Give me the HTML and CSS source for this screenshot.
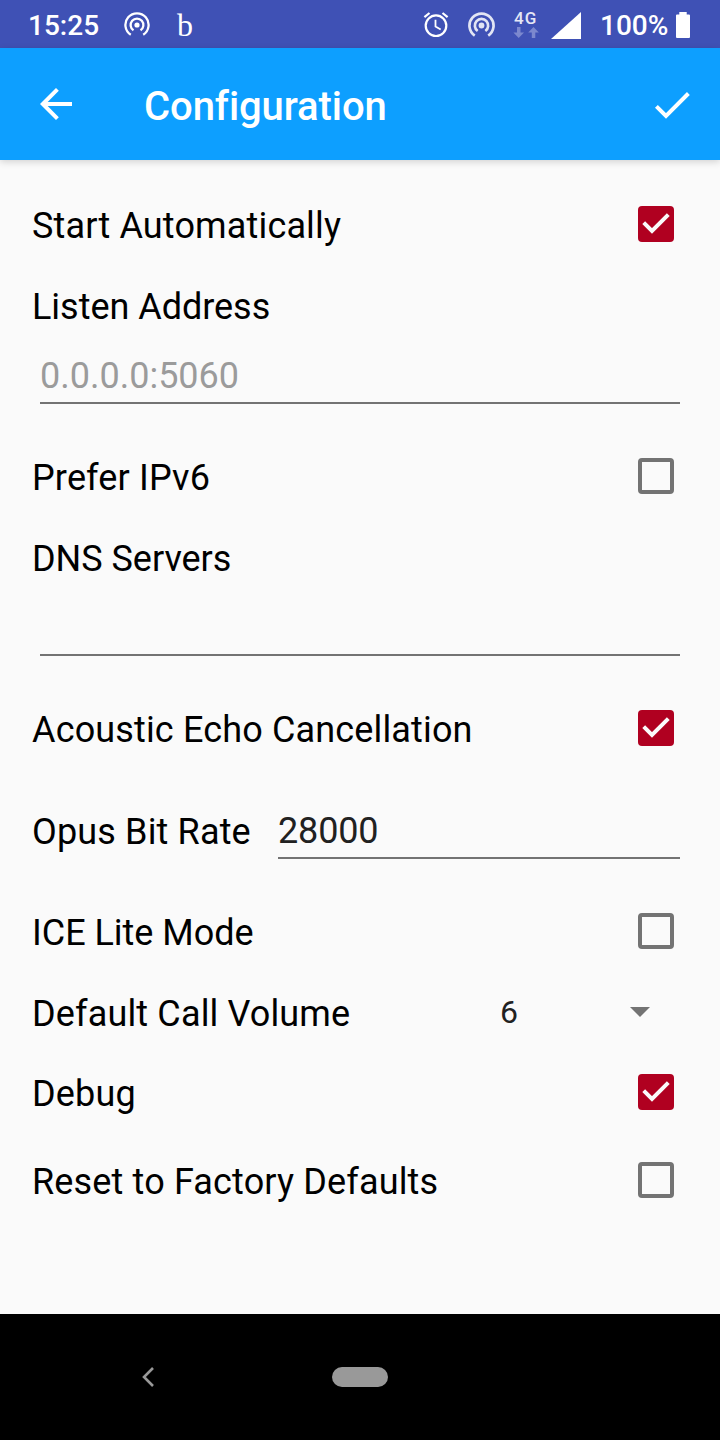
FILE: index.html
```html
<!DOCTYPE html>
<html lang="en">
<head>
<meta charset="utf-8">
<title>Configuration</title>
<link rel="stylesheet" href="styles.css">
</head>
<body>
<div class="screen">
  <div class="status">
    <span class="clock">15:25</span>
    <svg class="hotspot" viewBox="0 0 26 26"><g fill="none" stroke="#fff" stroke-width="2.3"><path d="M6.8 22.7A11.6 11.6 0 1 1 19.2 22.7"/><path d="M9.5 18.3A6.4 6.4 0 1 1 16.5 18.3"/></g><circle cx="13" cy="13" r="2.6" fill="#fff"/></svg>
    <span class="app-letter">b</span>
    <span class="spacer"></span>
    <svg class="alarm" viewBox="0 0 26 26"><g fill="none" stroke="#fff" stroke-width="2.2"><circle cx="13" cy="13.700" r="10.3"/><path d="M1.4 5.2 6.5 1M24.6 5.2 19.5 1"/><path stroke-width="1.8" d="M12.5 7.8V14.500l5.2 3"/></g></svg>
    <svg class="hotspot dim" viewBox="0 0 26 26"><g fill="none" stroke="#fff" stroke-width="2.6"><path d="M6.5 22.7A11.6 11.6 0 1 1 19.5 22.7"/><path d="M9.3 18.3A6.4 6.4 0 1 1 16.7 18.3"/></g><circle cx="13" cy="13" r="2.8" fill="#fff"/></svg>
    <div class="network">
      <span class="network-type">4G</span>
      <svg class="traffic" viewBox="0 0 26 12"><path fill="#7c88ce" d="M4 0h3.500v5.500H11L5.700 11 .4 5.500H4zM18.800 11h3.500V5.500h3.500L20.500 0l-5.300 5.500h3.600z"/></svg>
    </div>
    <svg class="signal" viewBox="0 0 30 27"><path fill="#fff" d="M0 27 30 0V27z"/></svg>
    <span class="percent">100%</span>
    <svg class="battery" viewBox="0 0 14 26"><path fill="#fff" d="M3.3 0h7.4v2.5H13a1 1 0 0 1 1 1V25a1 1 0 0 1-1 1H1a1 1 0 0 1-1-1V3.500a1 1 0 0 1 1-1H3.300z"/></svg>
  </div>
  <header class="appbar">
    <svg class="back" viewBox="0 0 32 32"><path fill="none" stroke="#fff" stroke-width="4" d="M32 16H3M17.400 1.400 2.800 16l14.600 14.600"/></svg>
    <h1 class="title">Configuration</h1>
    <svg class="done" viewBox="0 0 36 28"><path fill="none" stroke="#fff" stroke-width="4" d="M2.400 15.300 12 24.900 34.400 2.500"/></svg>
  </header>
  <main class="settings">
    <div class="row"><span class="label">Start Automatically</span><span class="box checked"><svg class="tick" viewBox="0 0 36 36"><path d="M5.700 16.600 14 24.900 30.300 8.600"/></svg></span></div>
    <div class="row caption"><span class="label tight">Listen Address</span></div>
    <div class="field hint">0.0.0.0:5060</div>
    <div class="row"><span class="label">Prefer IPv6</span><span class="box"></span></div>
    <div class="row caption"><span class="label tight">DNS Servers</span></div>
    <div class="field"></div>
    <div class="row"><span class="label">Acoustic Echo Cancellation</span><span class="box checked"><svg class="tick" viewBox="0 0 36 36"><path d="M5.700 16.600 14 24.900 30.300 8.600"/></svg></span></div>
    <div class="row bitrate"><span class="label">Opus Bit Rate</span><div class="field inline">28000</div></div>
    <div class="row ice"><span class="label tight">ICE Lite Mode</span><span class="box"></span></div>
    <div class="row volume"><span class="label">Default Call Volume</span><div class="select"><span>6</span><svg class="caret" viewBox="0 0 20 10"><path fill="#737373" d="M0 0h20L10 10z"/></svg></div></div>
    <div class="row debug"><span class="label">Debug</span><span class="box checked"><svg class="tick" viewBox="0 0 36 36"><path d="M5.700 16.600 14 24.900 30.300 8.600"/></svg></span></div>
    <div class="row reset"><span class="label">Reset to Factory Defaults</span><span class="box"></span></div>
  </main>
  <nav class="navbar">
    <svg class="nav-back" viewBox="0 0 12 20"><path fill="none" stroke="#999" stroke-width="2.600" d="M11 1 2 10l9 9"/></svg>
    <span class="home"></span>
  </nav>
</div>
</body>
</html>
```
FILE: styles.css
```css
* { box-sizing: border-box; }
body { margin: 0; font-family: Roboto, sans-serif; }
svg { display: block; flex: none; }
.screen { width: 720px; height: 1440px; display: flex; flex-direction: column; background: #fafafa; overflow: hidden; }

.status { height: 48px; flex: none; display: flex; align-items: center; padding: 2px 30px 0 28px; background: #3f51b5; color: #fff; }
.clock, .percent { font-size: 28px; font-weight: 500; line-height: 44px; padding-top: 2px; white-space: nowrap; }
.clock { width: 96px; }
.hotspot { width: 26px; height: 26px; }
.app-letter { font: 32px/46px "Liberation Serif", serif; margin-left: 27px; }
.spacer { flex: 1; }
.alarm { width: 26px; height: 26px; margin-right: 19px; }
.dim { width: 27px; height: 27px; opacity: .85; margin-right: 18px; }
.network { width: 26px; height: 28px; margin-right: 12px; color: #e5e7f5; }
.network-type { display: block; height: 16px; padding-left: 1px; font-size: 17px; font-weight: 500; line-height: 14px; letter-spacing: 1px; }
.traffic { width: 26px; height: 12px; }
.signal { width: 30px; height: 27px; margin-right: 19px; }
.percent { width: 76px; }
.battery { width: 14px; height: 26px; }

.appbar { height: 112px; flex: none; display: flex; align-items: center; padding: 0 30px 0 40px; background: #0d9fff; box-shadow: 0 2px 7px rgba(0, 0, 0, .16); z-index: 1; }
.back { width: 32px; height: 32px; }
.title { margin: 6px 0 0 72px; flex: 1; font-size: 40px; font-weight: 500; line-height: 48px; letter-spacing: -.08px; color: #fff; font-variant-ligatures: common-ligatures; }
.done { width: 36px; height: 28px; margin-top: 1px; }

.settings { flex: 1; padding: 26px 40px 0 32px; color: #000; font-size: 36px; line-height: 42px; }
.row { height: 80px; display: flex; align-items: center; justify-content: space-between; }
.label { white-space: nowrap; letter-spacing: .15px; }
.tight { letter-spacing: -.03px; }
.caption { height: 82px; }
.box { width: 36px; height: 36px; margin: 0 6px 4px 0; border: 4px solid #737373; border-radius: 4px; }
.checked { border: 0; background: #b00020; }
.tick { width: 36px; height: 36px; fill: none; stroke: #fafafa; stroke-width: 4; }
.field { height: 56px; margin: 0 0 34px 8px; padding-top: 7px; border-bottom: 2px solid #737373; color: #212121; }
.hint { color: #9b9b9b; }
.bitrate { height: 124px; }
.inline { width: 402px; margin: 0 0 2px; letter-spacing: -.15px; }
.ice { height: 78px; }
.volume { height: 84px; }
.debug { height: 76px; }
.reset { height: 100px; }
.select { width: 180px; padding-right: 30px; margin-bottom: 4px; display: flex; align-items: center; justify-content: space-between; font-size: 32px; color: #212121; }
.caret { width: 20px; height: 10px; }

.navbar { height: 126px; flex: none; display: flex; align-items: center; padding-left: 142px; background: #000; }
.nav-back { width: 12px; height: 20px; }
.home { width: 56px; height: 20px; margin-left: 178px; border-radius: 10px; background: #999; }
```
